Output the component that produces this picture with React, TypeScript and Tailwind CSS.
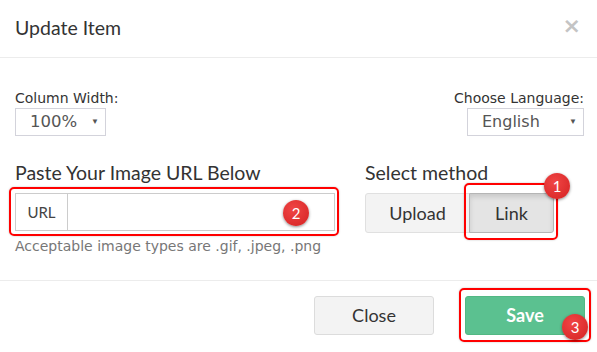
import React from 'react';

const Badge: React.FC<{ n: string; className: string }> = ({ n, className }) => (
  <div
    className={`absolute flex h-[26px] w-[26px] items-center justify-center rounded-full bg-[radial-gradient(circle_at_40%_35%,#f04545,#d42222)] text-[15px] leading-none text-white shadow-[0_1px_3px_rgba(0,0,0,0.45)] font-['Lato',sans-serif] ${className}`}
  >
    {n}
  </div>
);

const FakeSelect: React.FC<{ value: string; className: string; textClass: string }> = ({ value, className, textClass }) => (
  <div className={`relative flex h-[28px] items-center border border-[#d3d3db] bg-white ${className}`}>
    <span className={`text-[#555] font-['DejaVu_Sans',sans-serif] ${textClass}`}>{value}</span>
    <span className="absolute right-[6px] top-[8px] text-[8px] leading-none text-[#555]">▼</span>
  </div>
);

export default function App() {
  return (
    <div className="relative h-[352px] w-[597px] overflow-hidden bg-white font-['Lato',sans-serif] text-[#333]">
      {/* header */}
      <div className="flex h-[58px] items-center justify-between border-b border-[#ececec] px-[15px]">
        <h4 className="mt-[-2px] text-[19.5px] leading-[24px] text-[#333]">Update Item</h4>
        <span className="mr-[1px] mt-[-6px] text-[22px] font-bold leading-none text-[#c4c4c4] font-['DejaVu_Sans',sans-serif]">×</span>
      </div>

      {/* body */}
      <div className="px-[15px] pb-[25px] pt-[31px]">
        <div className="flex justify-between">
          <div className="flex flex-col">
            <label className="mb-[1px] text-[14px] leading-[18px] text-[#333] font-['DejaVu_Sans',sans-serif]">Column Width:</label>
            <FakeSelect value="100%" className="w-[91px] pl-[14px]" textClass="text-[16.5px]" />
          </div>
          <div className="-mr-[2px] flex flex-col items-end">
            <label className="mb-[1px] text-[14px] leading-[18px] text-[#333] font-['DejaVu_Sans',sans-serif]">Choose Language:</label>
            <FakeSelect value="English" className="w-[117px] pl-[14px]" textClass="text-[16px]" />
          </div>
        </div>

        <div className="mt-[25px] flex gap-[30px]">
          <div className="w-[320px]">
            <h4 className="mb-[8px] text-[19.5px] leading-[24px] text-[#333]">Paste Your Image URL Below</h4>
            <div className="relative">
              <div className="flex h-[38px] border border-[#ccc]">
                <span className="flex w-[52px] items-center justify-center border-r border-[#ccc] text-[15px] text-[#444]">URL</span>
                <div className="flex-1 bg-white" />
              </div>
              <div className="absolute -left-[6px] -top-[6px] h-[49px] w-[330px] rounded-[5px] border-2 border-[#f00] shadow-[0_0_2px_rgba(0,0,0,0.25)]" />
              <Badge n="2" className="left-[268px] top-[7px]" />
            </div>
            <p className="mt-[6px] whitespace-nowrap text-[14px] leading-[18px] text-[#777] font-['DejaVu_Sans',sans-serif]">Acceptable image types are .gif, .jpeg, .png</p>
          </div>

          <div>
            <h4 className="mb-[8px] text-[19.5px] leading-[24px] text-[#333]">Select method</h4>
            <div className="relative flex">
              <button className="h-[40px] w-[105px] rounded-l-[3px] border border-[#e0e0e0] bg-[#f3f3f3] text-[18px] text-[#333]">Upload</button>
              <button className="-ml-px h-[40px] w-[85px] rounded-r-[3px] border border-[#b5b5b5] bg-[#e4e4e4] text-[18px] text-[#333] shadow-[inset_0_3px_5px_rgba(0,0,0,0.12)]">Link</button>
              <div className="absolute left-[99px] -top-[10px] h-[57px] w-[94px] rounded-[5px] border-2 border-[#f00] shadow-[0_0_2px_rgba(0,0,0,0.25)]" />
              <Badge n="1" className="left-[179px] -top-[20px]" />
            </div>
          </div>
        </div>
      </div>

      {/* footer */}
      <div className="flex justify-end gap-[31px] border-t border-[#ececec] pr-[12px] pt-[15px]">
        <button className="h-[39px] w-[120px] rounded-[3px] border border-[#dcdcdc] bg-[#f3f3f3] text-[18px] text-[#333]">Close</button>
        <div className="relative">
          <button className="h-[39px] w-[120px] rounded-[3px] border border-[#52b883] bg-[#5bc190] text-[18px] font-bold text-white">Save</button>
          <div className="absolute -left-[6px] -top-[8px] h-[54px] w-[132px] rounded-[5px] border-2 border-[#f00] shadow-[0_0_2px_rgba(0,0,0,0.25)]" />
          <Badge n="3" className="left-[97px] top-[18px]" />
        </div>
      </div>
    </div>
  );
}
